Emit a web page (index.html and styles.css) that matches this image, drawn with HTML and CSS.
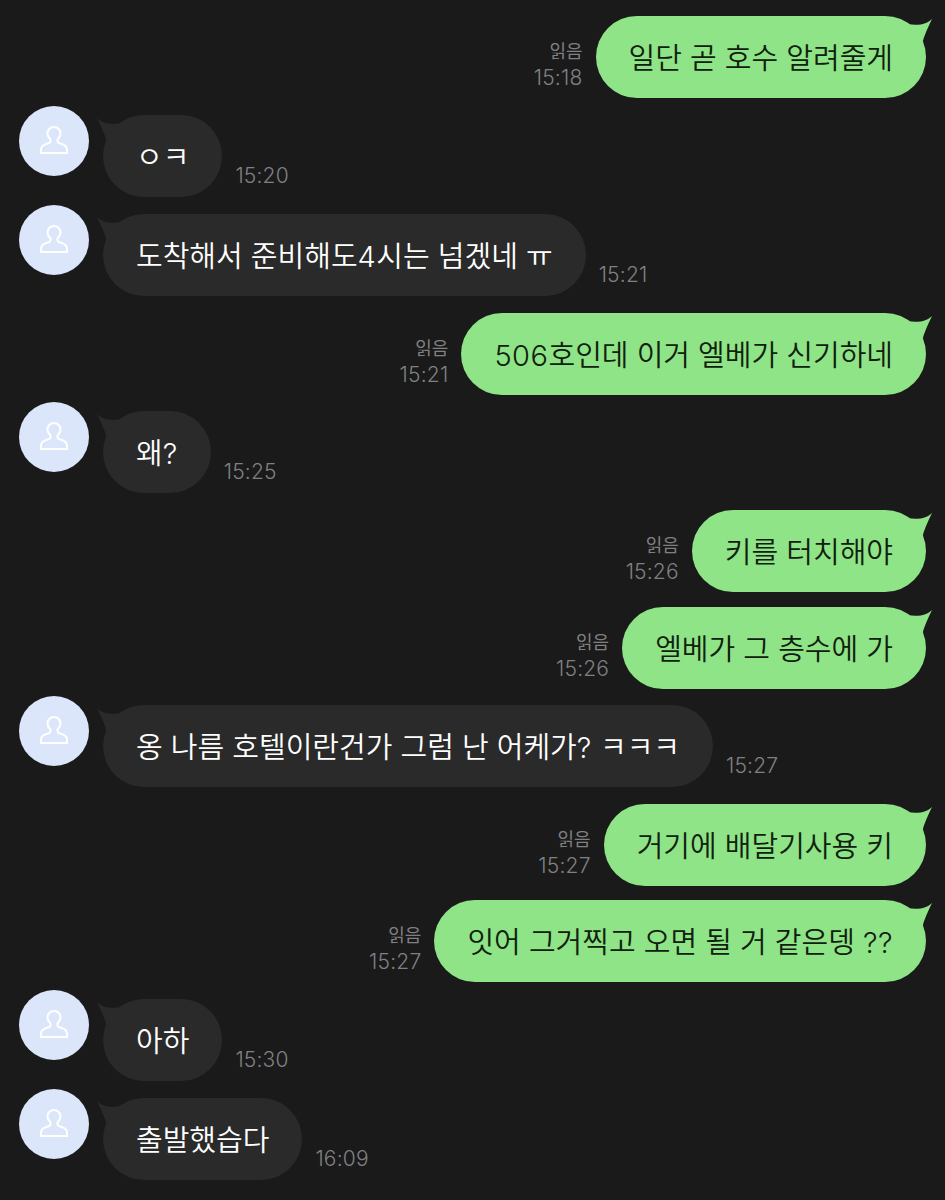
FILE: index.html
```html
<!DOCTYPE html>
<html lang="ko">
<head>
    <meta charset="UTF-8">
    <meta name="viewport" content="width=device-width, initial-scale=1.0">
    <title>대화</title>
    <link rel="stylesheet" href="styles.css">
</head>
<body>
    <svg class="defs" width="0" height="0">
        <symbol id="person" viewBox="0 0 28 28">
            <path d="M14 1C10 1 7.500 4 7.500 7.500C7.500 10.500 9 12 10.500 13.500V15.500C10.500 16.500 9.500 17 8 17.500C5.500 18.300 1 19 1 23.500V27H27V23.500C27 19 22.500 18.300 20 17.500C18.500 17 17.500 16.500 17.500 15.500V13.500C19 12 20.500 10.500 20.500 7.500C20.500 4 18 1 14 1Z"/>
        </symbol>
    </svg>

    <div class="chat">
        <div class="msg me">
            <div class="meta"><span>읽음</span><span class="time">15:18</span></div>
            <div class="bubble"><p>일단 곧 호수 알려줄게</p></div>
        </div>

        <div class="msg other">
            <div class="avatar"><svg><use href="#person"/></svg></div>
            <div class="bubble"><p>ㅇㅋ</p></div>
            <span class="time">15:20</span>
        </div>

        <div class="msg other">
            <div class="avatar"><svg><use href="#person"/></svg></div>
            <div class="bubble"><p>도착해서 준비해도<span class="latin">4</span>시는 넘겠네 ㅠ</p></div>
            <span class="time">15:21</span>
        </div>

        <div class="msg me">
            <div class="meta"><span>읽음</span><span class="time">15:21</span></div>
            <div class="bubble"><p><span class="latin">506</span>호인데 이거 엘베가 신기하네</p></div>
        </div>

        <div class="msg other gap-16">
            <div class="avatar"><svg><use href="#person"/></svg></div>
            <div class="bubble"><p>왜<span class="latin">?</span></p></div>
            <span class="time">15:25</span>
        </div>

        <div class="msg me">
            <div class="meta"><span>읽음</span><span class="time">15:26</span></div>
            <div class="bubble"><p>키를 터치해야</p></div>
        </div>

        <div class="msg me gap-15">
            <div class="meta"><span>읽음</span><span class="time">15:26</span></div>
            <div class="bubble"><p>엘베가 그 층수에 가</p></div>
        </div>

        <div class="msg other gap-16">
            <div class="avatar"><svg><use href="#person"/></svg></div>
            <div class="bubble"><p>옹 나름 호텔이란건가 그럼 난 어케가<span class="latin">?</span> ㅋㅋㅋ</p></div>
            <span class="time">15:27</span>
        </div>

        <div class="msg me">
            <div class="meta"><span>읽음</span><span class="time">15:27</span></div>
            <div class="bubble"><p>거기에 배달기사용 키</p></div>
        </div>

        <div class="msg me gap-14">
            <div class="meta"><span>읽음</span><span class="time">15:27</span></div>
            <div class="bubble"><p>잇어 그거찍고 오면 될 거 같은뎅 <span class="latin">??</span></p></div>
        </div>

        <div class="msg other">
            <div class="avatar"><svg><use href="#person"/></svg></div>
            <div class="bubble"><p>아하</p></div>
            <span class="time">15:30</span>
        </div>

        <div class="msg other">
            <div class="avatar"><svg><use href="#person"/></svg></div>
            <div class="bubble"><p>출발했습다</p></div>
            <span class="time">16:09</span>
        </div>
    </div>
</body>
</html>
```

FILE: styles.css
```css
* {
    box-sizing: border-box;
    margin: 0;
    padding: 0;
}
html, body {
    height: 1200px;
    overflow: hidden;
}
body {
    background-color: #1a1a1a;
    font-family: "Inter", "Noto Sans CJK KR", sans-serif;
}
.defs {
    position: absolute;
}
.chat {
    display: flex;
    flex-direction: column;
    padding: 16px 19px 0;
}
.msg {
    display: flex;
    align-items: flex-end;
    margin-top: 17px;
}
.msg:first-child {
    margin-top: 0;
}
.gap-16 {
    margin-top: 16px;
}
.gap-15 {
    margin-top: 15px;
}
.gap-14 {
    margin-top: 14px;
}
.me {
    justify-content: flex-end;
}
.bubble {
    position: relative;
    height: 82px;
    padding: 0 33px 2px;
    display: flex;
    align-items: center;
    border-radius: 41px;
    font-family: "Noto Sans CJK KR", sans-serif;
    font-size: 29px;
    font-weight: 350;
    white-space: nowrap;
}
.latin {
    font-family: "Inter", sans-serif;
    font-weight: 350;
    letter-spacing: 0.5px;
}
.bubble::before {
    content: "";
    position: absolute;
    top: 2px;
    width: 30px;
    height: 28px;
}
.me .bubble {
    background-color: #8ee486;
    color: #10200e;
}
.me .bubble::before {
    right: -7px;
    background-color: #8ee486;
    clip-path: path("M29 1C24 6 16 8 4 6L19 26C21 18 25 9 29 1Z");
}
.other .bubble {
    background-color: #2a2a2a;
    color: #fff;
}
.other .bubble::before {
    left: -7px;
    background-color: #2a2a2a;
    clip-path: path("M1 1C6 6 14 8 26 6L11 26C9 18 5 9 1 1Z");
}
.time {
    color: #808083;
    font-size: 21px;
    font-weight: 300;
    letter-spacing: 0.2px;
    line-height: 24px;
}
.other .time {
    margin-left: 13px;
    margin-bottom: 9px;
}
.meta {
    display: flex;
    flex-direction: column;
    align-items: flex-end;
    gap: 2px;
    margin-right: 13px;
    margin-bottom: 8px;
    color: #808083;
    font-size: 18px;
    line-height: 24px;
}
.avatar {
    align-self: flex-start;
    width: 70px;
    height: 70px;
    margin-top: -9px;
    margin-right: 14px;
    border-radius: 50%;
    background-color: #dce6fb;
    display: flex;
    align-items: center;
    justify-content: center;
}
.avatar svg {
    width: 28px;
    height: 28px;
    margin-bottom: 3px;
    fill: none;
    stroke: #fff;
    stroke-width: 2;
}
```
